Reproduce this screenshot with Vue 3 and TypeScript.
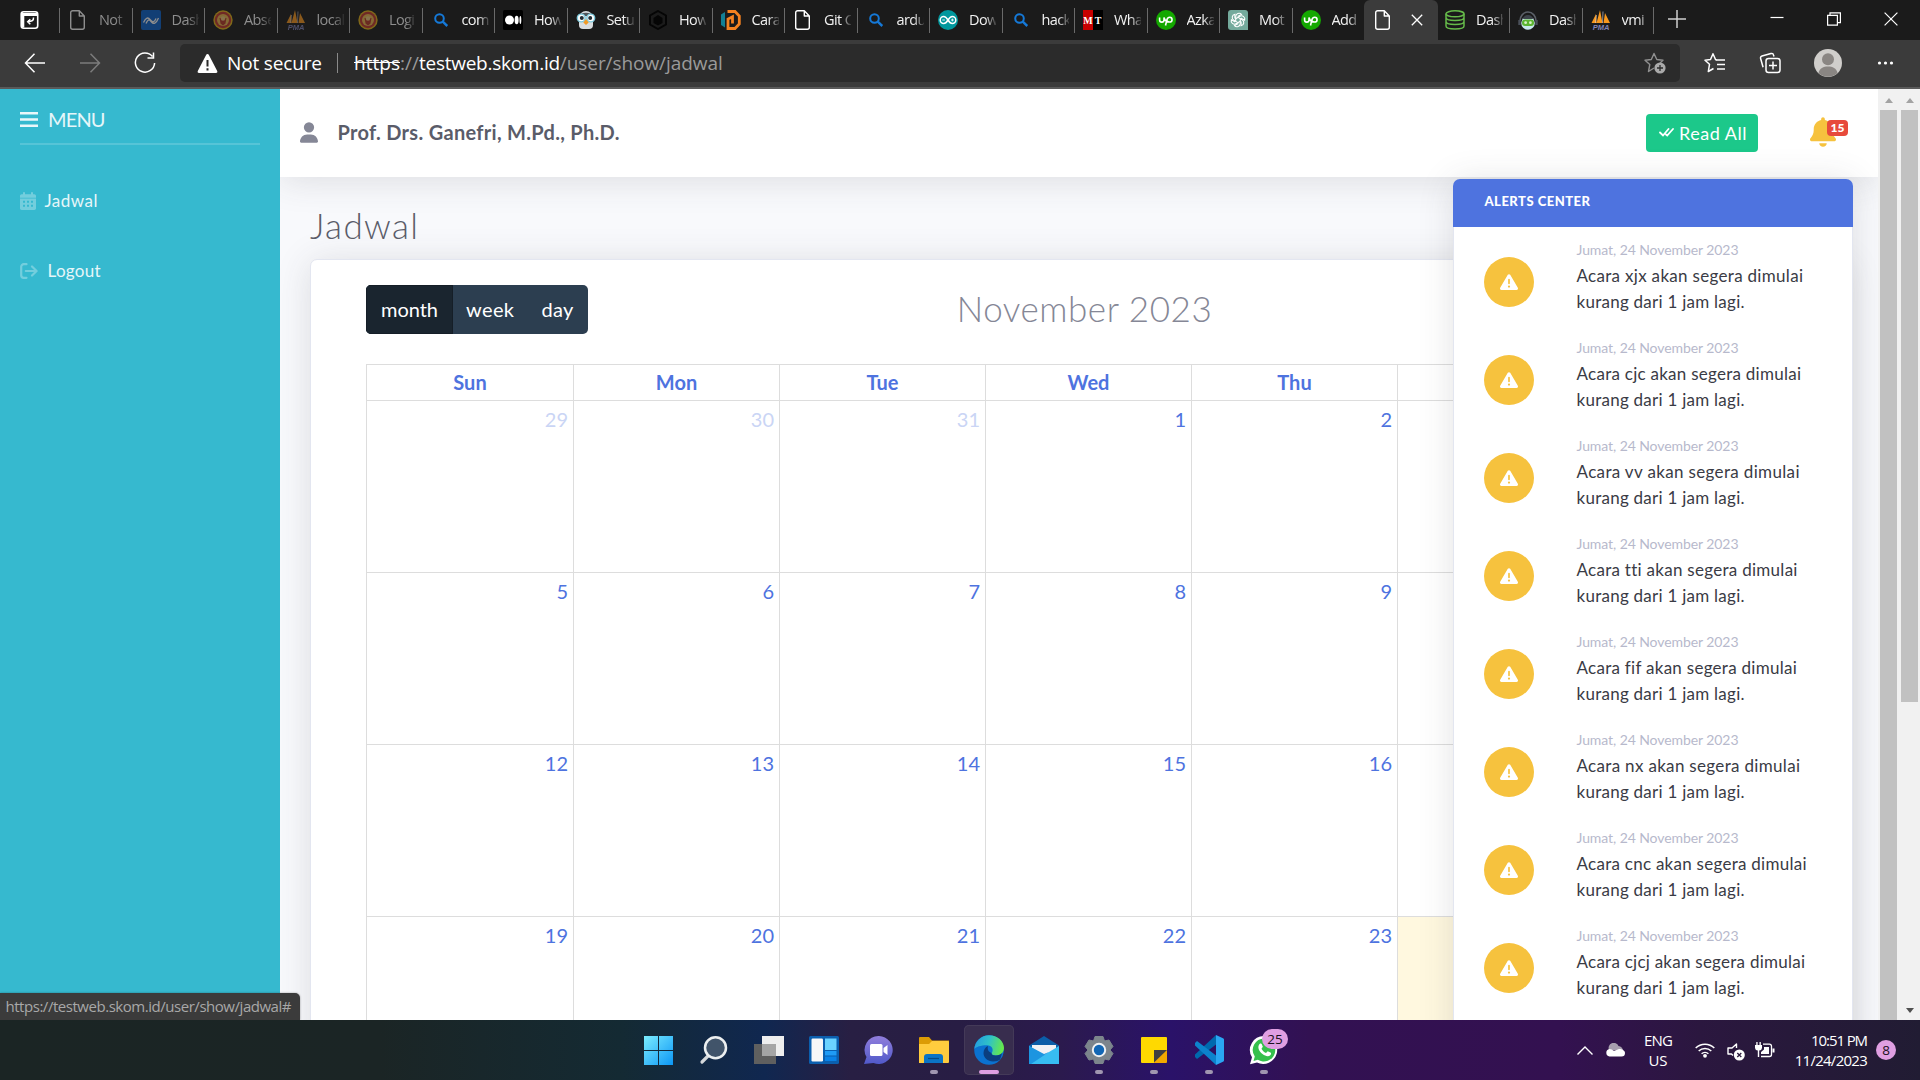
<script setup lang="ts">
import type { Directive } from 'vue'

interface Tab {
  icon: string
  label: string
  sleeping?: boolean
  active?: boolean
}

interface DayCell {
  label: string
  outside?: boolean
  today?: boolean
}

const tabs: Tab[] = [
  { icon: 'page', label: 'Not', sleeping: true },
  { icon: 'wave', label: 'Dash', sleeping: true },
  { icon: 'seal', label: 'Abse', sleeping: true },
  { icon: 'pma', label: 'local', sleeping: true },
  { icon: 'seal', label: 'Logi', sleeping: true },
  { icon: 'search', label: 'com' },
  { icon: 'medium', label: 'How' },
  { icon: 'penguin', label: 'Setu' },
  { icon: 'hex', label: 'How' },
  { icon: 'domain', label: 'Cara' },
  { icon: 'page', label: 'Git C' },
  { icon: 'search', label: 'ardu' },
  { icon: 'arduino', label: 'Dow' },
  { icon: 'search', label: 'hack' },
  { icon: 'mt', label: 'Wha' },
  { icon: 'upwork', label: 'Azka' },
  { icon: 'gpt', label: 'Mot' },
  { icon: 'upwork', label: 'Add' },
  { icon: 'page', label: '', active: true },
  { icon: 'db', label: 'Dash' },
  { icon: 'bot', label: 'Dash' },
  { icon: 'pma', label: 'vmi' },
]

const weekdays = ['Sun', 'Mon', 'Tue', 'Wed', 'Thu', '', '']

/* The last two columns lie behind the alerts panel and carry no number. */
const weeks: DayCell[][] = [0, 1, 2, 3].map((week) =>
  weekdays.map((name, column) => {
    const day = week * 7 + column - 2
    const label = name ? String(day < 1 ? 31 + day : day) : ''
    return { label, outside: day < 1, today: day === 24 }
  }),
)

const alerts: { name: string; width: number }[] = [
  { name: 'xjx', width: 226.5 },
  { name: 'cjc', width: 224.5 },
  { name: 'vv', width: 223 },
  { name: 'tti', width: 220.5 },
  { name: 'fif', width: 220 },
  { name: 'nx', width: 223.5 },
  { name: 'cnc', width: 230 },
  { name: 'cjcj', width: 228.5 },
]

/* Spreads the letters of a label so that it takes the given width. */
const vFit: Directive<HTMLElement, number> = {
  mounted(el, { value }) {
    const count = (el.textContent ?? '').length
    const natural = el.getBoundingClientRect().width
    if (count > 1 && natural > 0) {
      el.style.letterSpacing = `${((value - natural) / (count - 1)).toFixed(3)}px`
    }
  },
}
</script>

<template>
  <div class="desktop">
    <header class="tabstrip">
      <svg class="tab-actions" viewBox="0 0 20 20">
        <rect x="1.2" y="1.800" width="16.500" height="16.500" rx="2.5" fill="none" stroke="#fff" stroke-width="1.600" />
        <path d="M1.500 3h16v3h-16zM1.500 5h2.800v12.500H1.500z" fill="#fff" />
        <path d="M13.500 7.500c.3 3-1.500 4.200-5.500 4.200M10.300 9.200 7.700 11.700l2.600 2.500" fill="none" stroke="#fff" stroke-width="1.500" />
      </svg>
      <div v-for="(tab, i) in tabs" :key="i" class="tab" :class="{ sleeping: tab.sleeping, active: tab.active }">
        <svg class="favicon" viewBox="0 0 20 20">
          <template v-if="tab.icon === 'page'">
            <path d="M2.700 2.700a2 2 0 0 1 2-2h6.600l5 5.200v11.400a2 2 0 0 1-2 2H4.700a2 2 0 0 1-2-2zM11.300.8v5.200h5" fill="none" stroke="#fff" stroke-width="1.400" stroke-linejoin="round" />
          </template>
          <template v-else-if="tab.icon === 'wave'">
            <rect width="20" height="20" rx="2" fill="#0b63ce" />
            <path d="M2.500 12.500c2.500-5.500 4.500-5.500 7-2.500s4 2 5.500-1.500M5 13.500c2.500-5 3.500-4 5.500-1.500s4.500 2 7-4" fill="none" stroke="#fff" stroke-width="1.300" />
          </template>
          <template v-else-if="tab.icon === 'seal'">
            <circle cx="10" cy="10" r="9.700" fill="#e5b418" />
            <circle cx="10" cy="10" r="8.200" fill="#c4382f" />
            <circle cx="10" cy="10" r="6" fill="#efb94f" />
            <path d="M6.500 8h7l-1 5.500-2.500 2-2.500-2z" fill="#b83a28" />
            <circle cx="10" cy="8.500" r="2.200" fill="#f0c87c" />
          </template>
          <template v-else-if="tab.icon === 'pma'">
            <path d="M9 0 11.500 13H5.500zM5 4 5.500 13H.5zM14 3l5 10h-6.500z" fill="#f8981d" />
            <path d="M5.500 5 4.500 13M12 1.500 11.500 13" stroke="#d9d9e6" stroke-width=".6" />
            <text x="10" y="19.900" text-anchor="middle" class="pma-label">PMA</text>
          </template>
          <template v-else-if="tab.icon === 'search'">
            <circle cx="8.500" cy="8.500" r="4.300" fill="none" stroke="#1579d8" stroke-width="2" />
            <path d="m11.700 11.700 4.600 4.300" stroke="#1579d8" stroke-width="2.400" />
          </template>
          <template v-else-if="tab.icon === 'medium'">
            <rect width="20" height="20" rx="1.500" fill="#000" />
            <circle cx="6.500" cy="10" r="4.500" fill="#fff" />
            <ellipse cx="13.600" cy="10" rx="2" ry="4.300" fill="#fff" />
            <ellipse cx="17.400" cy="10" rx=".9" ry="3.900" fill="#fff" />
          </template>
          <template v-else-if="tab.icon === 'penguin'">
            <path d="M3 8a7 7 0 0 1 14 0v7a4 4 0 0 1-4 4H7a4 4 0 0 1-4-4z" fill="#d9dde0" />
            <path d="M3 6a7.500 5 0 0 1 14 0z" fill="#50555a" />
            <circle cx="5.200" cy="8" r="3.900" fill="#fff" stroke="#7cc9dc" stroke-width="1.400" />
            <circle cx="14.800" cy="8" r="3.900" fill="#fff" stroke="#7cc9dc" stroke-width="1.400" />
            <circle cx="5.800" cy="8" r="2" fill="#222c33" /><circle cx="14.200" cy="8" r="2" fill="#222c33" />
            <path d="m10 9 2.700 3.500L10 15l-2.700-2.500z" fill="#f09a27" />
          </template>
          <template v-else-if="tab.icon === 'hex'">
            <path d="m10 1 8 4.500v9L10 19l-8-4.500v-9z" fill="none" stroke="#050505" stroke-width="2" />
            <path d="m10 5 4.500 3v5L10 15.500 5.500 13V8z" fill="#050505" />
          </template>
          <template v-else-if="tab.icon === 'domain'">
            <path d="M0 4.500 4 2v15.500L0 15z" fill="#137f94" />
            <path d="M6.500 1.500H14l4.300 4.500v8L14 18.500H7V9l4.500-2.200v6.700" fill="none" stroke="#f58220" stroke-width="2.800" />
          </template>
          <template v-else-if="tab.icon === 'arduino'">
            <circle cx="10" cy="10" r="10" fill="#00979d" />
            <path d="M10 10C8 6.800 6.800 6.500 5.700 6.500a3.500 3.500 0 0 0 0 7c1.100 0 2.300-.3 4.300-3.500s3.200-3.500 4.300-3.500a3.500 3.500 0 0 1 0 7c-1.100 0-2.300-.3-4.300-3.500z" fill="none" stroke="#fff" stroke-width="1.500" />
            <path d="M4.300 10h2.600M13 10h2.800M14.400 8.600v2.800" stroke="#fff" stroke-width=".9" />
          </template>
          <template v-else-if="tab.icon === 'mt'">
            <path d="M0 0h10v20H0z" fill="#c80000" />
            <path d="M10 0h10v20H10z" fill="#000" />
            <text x="4.900" y="13.800" text-anchor="middle" class="mt-label">M</text>
            <text x="15" y="13.800" text-anchor="middle" class="mt-label">T</text>
          </template>
          <template v-else-if="tab.icon === 'upwork'">
            <circle cx="10" cy="10" r="10" fill="#14a800" />
            <path d="M3.600 7.500v2.400a2.200 2.200 0 0 0 4.400 0V7.500c1 2.800 2 4.500 4 4.500M9.500 15.500l1.400-5.700c.5-1.700 1.500-2.500 2.800-2.500a2.300 2.300 0 0 1 0 4.700c-1.300 0-2-.5-2.800-1.300" fill="none" stroke="#fff" stroke-width="1.600" />
          </template>
          <template v-else-if="tab.icon === 'gpt'">
            <path d="M3 0h14a3 3 0 0 1 3 3v17H3a3 3 0 0 1-3-3V3a3 3 0 0 1 3-3z" fill="#74aa9c" />
            <g fill="none" stroke="#fff" stroke-width="1.100">
              <path v-for="n in 6" :key="n" d="M7.700 11.300V6.500a3.300 3.300 0 0 1 5.800-2.100L9.700 6.600" :transform="`rotate(${n * 60} 10 10)`" />
            </g>
          </template>
          <template v-else-if="tab.icon === 'db'">
            <g fill="none" stroke="#66bb4a" stroke-width="1.500">
              <ellipse cx="10" cy="3.800" rx="9" ry="3" />
              <path d="M1 3.800v3.600c0 4 18 4 18 0V3.800M1 8v3.500c0 4 18 4 18 0V8M1 12v4c0 4 18 4 18 0v-4" />
            </g>
          </template>
          <template v-else-if="tab.icon === 'bot'">
            <path d="M2 11a8 9 0 0 1 16 0" fill="none" stroke="#5b6068" stroke-width="1.600" />
            <circle cx="10" cy="13" r="6.800" fill="#c8e8ee" />
            <rect x="4" y="9.500" width="12" height="6.500" rx="3" fill="#5cb531" />
            <circle cx="7.600" cy="12.700" r="1.400" fill="#d9f2c8" /><circle cx="12.400" cy="12.700" r="1.400" fill="#d9f2c8" />
            <path d="M5 9a5 4 0 0 1 10 0z" fill="#3d434b" />
            <path d="M1.500 10v5M18.500 10v5" stroke="#4a505a" stroke-width="2.400" />
          </template>
        </svg>
        <span v-if="!tab.active" class="tab-label">{{ tab.label }}</span>
        <svg v-else class="tab-close" viewBox="0 0 12 12"><path d="m.8.8 10.400 10.400M11.200.8.8 11.200" stroke="#fff" stroke-width="1.300" /></svg>
      </div>
      <svg class="new-tab" viewBox="0 0 18 18"><path d="M9 0v18M0 9h18" stroke="#d0d0d0" stroke-width="1.500" /></svg>
      <div class="window-controls">
        <svg viewBox="0 0 14 14"><path d="M.5 5.500h13" stroke="#fff" stroke-width="1.200" /></svg>
        <svg viewBox="0 0 14 14"><path d="M.6 3.400h9.800v9.800H.6zM3 3.400V.8h10.400v9.800h-2.800" fill="none" stroke="#fff" stroke-width="1.200" /></svg>
        <svg viewBox="0 0 14 14"><path d="m.6.6 12.800 12.800M13.400.6.6 13.400" stroke="#fff" stroke-width="1.200" /></svg>
      </div>
    </header>

    <nav class="toolbar">
      <div class="nav-buttons">
        <svg viewBox="0 0 22 22"><path d="M21 11H1.500M10.500 1.800 1.500 11l9 9.200" fill="none" stroke="#fff" stroke-width="1.500" /></svg>
        <svg viewBox="0 0 22 22"><path d="M1 11h19.500M11.500 1.800l9 9.200-9 9.200" fill="none" stroke="#7c7c7c" stroke-width="1.500" /></svg>
        <svg viewBox="0 0 22 22"><path d="M18.500 4.500A9.600 9.600 0 1 0 20.600 11M19.500.5v5.600h-6" fill="none" stroke="#fff" stroke-width="1.500" /></svg>
      </div>
      <div class="address">
        <svg class="insecure" viewBox="0 0 20 19"><path d="M10 0c.7 0 1.100.4 1.400 1l8.300 16c.5 1-.1 2-1.200 2h-17C.4 19-.2 18 .3 17L8.600 1c.3-.6.700-1 1.400-1z" fill="#fff" /><path d="M10 6v6.500M10 14.300v2.200" stroke="#2b2b2b" stroke-width="2" /></svg>
        <span class="security"><span v-fit="95">Not secure</span></span>
        <span class="address-divider"></span>
        <span class="url"><span v-fit="46" class="scheme">https</span><span v-fit="19" class="dim">://</span><span v-fit="141" class="host">testweb.skom.id</span><span v-fit="163" class="dim">/user/show/jadwal</span></span>
        <svg class="favorite" viewBox="0 0 22 22"><path d="m10 16-5.500 3.500 1.300-7L1 8.300l6.300-.8L10 1.500l2.800 6 6.200.7-3 2.800" fill="none" stroke="#909090" stroke-width="1.400" stroke-linejoin="round" /><circle cx="16" cy="16" r="5.600" fill="#aaa" /><path d="M16 13v6M13 16h6" stroke="#2b2b2b" stroke-width="1.300" /></svg>
      </div>
      <div class="actions">
        <svg class="act-star" viewBox="0 0 22 22"><path d="m12.500 8-1-.5L9 1.800 6.500 7.500 1 8.300l4.500 4-1.200 7.200L9.500 16.500" fill="none" stroke="#fff" stroke-width="1.500" stroke-linejoin="round" /><path d="M12 8h9M13 12.500h8M13 17h8" stroke="#fff" stroke-width="1.500" /></svg>
        <svg class="act-coll" viewBox="0 0 22 22"><path d="M15 4.500 14.500 3a2 2 0 0 0-2.500-1.500L3 4A2 2 0 0 0 1.600 6.500l2.500 8.800" fill="none" stroke="#fff" stroke-width="1.500" /><rect x="7" y="6.500" width="14" height="14" rx="2.500" fill="none" stroke="#fff" stroke-width="1.500" /><path d="M14 9.500v8M10 13.500h8" stroke="#fff" stroke-width="1.500" /></svg>
        <svg class="avatar" viewBox="0 0 28 28"><circle cx="14" cy="14" r="14" fill="#d0cecb" /><circle cx="14" cy="10.300" r="6" fill="#8a8683" /><path d="M4.500 24c1-5 5-6.500 9.500-6.500s8.500 1.500 9.500 6.500A14 14 0 0 1 4.500 24z" fill="#8a8683" /></svg>
        <svg class="more" viewBox="0 0 16 4"><circle cx="2" cy="2" r="1.600" fill="#fff" /><circle cx="8" cy="2" r="1.600" fill="#fff" /><circle cx="14" cy="2" r="1.600" fill="#fff" /></svg>
      </div>
    </nav>

    <main class="viewport">
      <aside class="sidebar">
        <div class="menu-head">
          <svg class="bars" viewBox="0 0 18 15"><path d="M0 1.300h18M0 7.500h18M0 13.700h18" stroke="#e9f7fa" stroke-width="2.600" /></svg>
          <span v-fit="57.500">MENU</span>
        </div>
        <hr />
        <a class="side-link jadwal">
          <svg viewBox="0 0 16 18"><path d="M4 0a1 1 0 0 1 1 1v1.300h6V1a1 1 0 0 1 2 0v1.300h1.300c.9 0 1.700.7 1.700 1.700v1.700H0V4c0-1 .8-1.700 1.700-1.700H3V1a1 1 0 0 1 1-1zM0 6.500h16v9.800c0 .9-.8 1.700-1.700 1.700H1.700C.8 18 0 17.200 0 16.300zm3 2.300v2h2v-2zm4 0v2h2v-2zm4 0v2h2v-2zm-8 4v2h2v-2zm4 0v2h2v-2zm4 0v2h2v-2z" fill="#fff" fill-rule="evenodd" /></svg>
          <span v-fit="53">Jadwal</span>
        </a>
        <a class="side-link logout">
          <svg viewBox="0 0 18 16"><path d="M6.500 1.200H3.700a2.500 2.500 0 0 0-2.500 2.500v8.600a2.500 2.500 0 0 0 2.500 2.500h2.800M5.800 8H16.500M12 3.500 16.600 8 12 12.500" fill="none" stroke="#fff" stroke-width="2.200" stroke-linecap="round" stroke-linejoin="round" /></svg>
          <span v-fit="53">Logout</span>
        </a>
      </aside>

      <section class="content">
        <div class="topbar">
          <svg class="user" viewBox="0 0 448 512"><path d="M224 256A128 128 0 1 0 224 0a128 128 0 1 0 0 256zm-45.700 48C79.800 304 0 383.800 0 482.300 0 498.700 13.300 512 29.700 512h388.600c16.400 0 29.700-13.300 29.700-29.700C448 383.800 368.200 304 269.700 304z" fill="#858796" /></svg>
          <strong v-fit="282" class="user-name">Prof. Drs. Ganefri, M.Pd., Ph.D.</strong>
          <button class="read-all">
            <svg viewBox="0 0 15 9"><path d="m1 4.500 3 3 5.500-6.500M7 6.500l1.200 1L14 1" fill="none" stroke="#fff" stroke-width="1.800" stroke-linecap="round" /></svg>
            <span v-fit="67.500">Read All</span>
          </button>
          <div class="bell">
            <svg viewBox="0 0 448 512"><path d="M224 0c-17.700 0-32 14.300-32 32v19.200C119 66 64 130.600 64 208v18.800c0 47-17.300 92.400-48.500 127.600l-7.400 8.300c-8.400 9.400-10.400 22.900-5.300 34.400S19.400 416 32 416h384c12.600 0 24-7.400 29.200-18.900s3.100-25-5.300-34.400l-7.400-8.300C401.300 319.200 384 273.900 384 226.800V208c0-77.400-55-142-128-156.800V32c0-17.700-14.300-32-32-32zm45.300 493.300c12-12 18.700-28.300 18.700-45.300H160c0 17 6.700 33.300 18.700 45.300s28.300 18.700 45.300 18.700 33.300-6.700 45.300-18.700z" fill="#f6c23e" /></svg>
            <span class="counter">15</span>
          </div>
        </div>

        <div class="page">
          <h1><span v-fit="108">Jadwal</span></h1>
          <div class="card">
            <div class="cal-toolbar">
              <div class="views">
                <button class="view current"><span v-fit="57">month</span></button>
                <button class="view"><span v-fit="48">week</span></button>
                <button class="view"><span v-fit="32">day</span></button>
              </div>
              <h2><span v-fit="255">November 2023</span></h2>
              <div class="views-spacer"></div>
            </div>
            <div class="calendar">
              <div class="weekdays">
                <div v-for="(name, column) in weekdays" :key="column">{{ name }}</div>
              </div>
              <div v-for="(week, w) in weeks" :key="w" class="week">
                <div v-for="(day, column) in week" :key="column" class="day" :class="{ outside: day.outside, today: day.today }">
                  {{ day.label }}
                </div>
              </div>
            </div>
          </div>
        </div>

        <div class="alerts">
          <div class="alerts-head"><span v-fit="105.500">ALERTS CENTER</span></div>
          <div v-for="alert in alerts" :key="alert.name" class="alert">
            <div class="alert-icon">
              <svg viewBox="0 0 512 512"><path d="M256 32c14.200 0 27.300 7.500 34.500 19.800l216 368c7.300 12.400 7.300 27.700.2 40.100S486.300 480 472 480H40c-14.300 0-27.600-7.700-34.700-20.100s-7-27.800.2-40.100l216-368C228.700 39.500 241.800 32 256 32zm0 128c-13.300 0-24 10.700-24 24v112c0 13.300 10.700 24 24 24s24-10.700 24-24V184c0-13.300-10.700-24-24-24zm32 224a32 32 0 1 0-64 0 32 32 0 1 0 64 0z" fill="#fff" /></svg>
            </div>
            <div class="alert-text">
              <div class="date"><span v-fit="162">Jumat, 24 November 2023</span></div>
              <div><span v-fit="alert.width">Acara {{ alert.name }} akan segera dimulai</span></div>
              <div><span v-fit="168">kurang dari 1 jam lagi.</span></div>
            </div>
          </div>
        </div>
      </section>

      <div class="scrollbars">
        <div class="scrollbar">
          <span class="arrow up"></span>
          <span class="thumb full"></span>
        </div>
        <div class="scrollbar">
          <span class="arrow up"></span>
          <span class="thumb"></span>
          <span class="arrow down"></span>
        </div>
      </div>

      <div class="status"><span v-fit="286">https://testweb.skom.id/user/show/jadwal#</span></div>
    </main>

    <footer class="taskbar">
      <div class="apps">
        <div class="app">
          <svg viewBox="0 0 30 30"><defs><linearGradient id="win" x1="0" y1="0" x2="30" y2="30" gradientUnits="userSpaceOnUse"><stop stop-color="#7deeff" /><stop offset="1" stop-color="#0a95f5" /></linearGradient></defs><path d="M0 1h14v14H0zM15 1h14v14H15zM0 16h14v14H0zM15 16h14v14H15z" fill="url(#win)" /></svg>
        </div>
        <div class="app">
          <svg viewBox="0 0 30 30"><path d="M9.500 20.500 3 27" stroke="#d5d8da" stroke-width="3.200" stroke-linecap="round" /><circle cx="16.500" cy="12.800" r="10.500" fill="#41546a" stroke="#eceff0" stroke-width="2.500" /></svg>
        </div>
        <div class="app">
          <svg viewBox="0 0 30 30"><path d="M8 1h22v20H8z" fill="#eee" /><path d="M0 9h22v20H0z" fill="#5f5f5f" /><path d="M8 9h14v12H8z" fill="#a5a5a5" /></svg>
        </div>
        <div class="app">
          <svg viewBox="0 0 30 30"><rect y="1" width="30" height="28" rx="1.500" fill="#0b5fae" /><rect x="2.500" y="3.500" width="11.500" height="23" rx="1.200" fill="#f7f7f7" /><path d="M16 3.500h11.500V15H16z" fill="#6bd3ff" /><path d="M16 16h11.500v4.500H16z" fill="#1f9bf5" /><path d="M16 21.500h11.500v4.500H16z" fill="#0a82e6" /></svg>
        </div>
        <div class="app">
          <svg viewBox="0 0 30 30"><defs><linearGradient id="chat" x1="0" y1="0" x2="0" y2="1"><stop stop-color="#917edc" /><stop offset="1" stop-color="#5059c9" /></linearGradient></defs><path d="M15 1a14 14 0 1 1-5.500 27L0 29l2.500-7A14 14 0 0 1 15 1z" fill="url(#chat)" /><rect x="6" y="9" width="12.500" height="12" rx="1.500" fill="#fff" /><path d="m19.500 13 4-3v10l-4-3z" fill="#fff" /></svg>
        </div>
        <div class="app running">
          <svg viewBox="0 0 30 30"><path d="M0 3a1 1 0 0 1 1-1h9l3 3.500H30V12H0z" fill="#dc9c05" /><path d="M0 9h10l3-3h16a1 1 0 0 1 1 1v20a1 1 0 0 1-1 1H0z" fill="#ffcc3e" /><path d="M5 28v-6a3 3 0 0 1 3-3h13a3 3 0 0 1 3 3v6z" fill="#0b74c6" /><path d="M9 23.500h11" stroke="#064b87" stroke-width="1.200" /></svg>
        </div>
        <div class="app focused">
          <svg viewBox="0 0 30 30"><defs><linearGradient id="edge-a" x1="0" y1=".2" x2="1" y2=".4"><stop stop-color="#249be0" /><stop offset=".5" stop-color="#2fc2c8" /><stop offset="1" stop-color="#66e94a" /></linearGradient></defs><circle cx="15" cy="15" r="14.800" fill="#0b72d0" /><path d="M.3 14C1 6 7.500.2 15 .2c8.500 0 15 6 15 12.800 0 4.500-3.500 7.500-8 7.500-3.300 0-4.800-1.200-4.300-2.500 2.400-3.300.2-7.700-4.700-7.700C6.500 10.300 2 12 .3 14z" fill="url(#edge-a)" /><path d="M17.600 18c-.5 1.300 1 2.500 4.300 2.500 2.700 0 4.800-1 6.200-2.500l-2 6.500c-1.200 1-4 2-7 2-5.500 0-9.600-4-9.600-8.500 0-3 1.800-6 4.500-7-1 4 1 6 3.600 7z" fill="#0b3f80" /></svg>
        </div>
        <div class="app">
          <svg viewBox="0 0 30 30"><path d="M0 10.500 15 1l15 9.500V29H0z" fill="#0b5ea8" /><path d="M3 10h24v10H3z" fill="#f0f2f5" /><path d="m0 11 15 9 15-9v18H0z" fill="#37bdf2" /><path d="M0 11v18h2l18-12-5 2z" fill="#1c95e0" /></svg>
        </div>
        <div class="app running">
          <svg viewBox="0 0 30 30"><path d="m11 1.500 8 0 1.500 4.500 4.500-1 4 6.500-3 3.500 3 3.500-4 6.500-4.500-1-1.500 4.500h-8l-1.500-4.500-4.500 1-4-6.500L4 15l-3-3.500 4-6.500 4.500 1z" fill="#7c858c" stroke="#7c858c" stroke-linejoin="round" /><circle cx="15" cy="15" r="6.200" fill="#1267b5" stroke="#eef1f3" stroke-width="2" /></svg>
        </div>
        <div class="app running">
          <svg viewBox="0 0 30 30"><path d="M2 3a1 1 0 0 1 1-1h24a1 1 0 0 1 1 1v12L15 28H3a1 1 0 0 1-1-1z" fill="#ffd900" /><path d="M28 15v12a1 1 0 0 1-1 1H15V15z" fill="#f2a900" /><path d="M15 15h13L15 27.500z" fill="#404040" /></svg>
        </div>
        <div class="app running">
          <svg viewBox="0 0 30 30"><path d="M22 0v30l7-3.300a1.500 1.500 0 0 0 1-1.500V4.800a1.500 1.500 0 0 0-1-1.500z" fill="#2aa6f2" /><path d="M22 0 1 19.500v2.500L3 24l19-14.500z" fill="#0069ad" /><path d="M22 30 1 10.500V8L3 6l19 14.500z" fill="#0c83cc" /></svg>
        </div>
        <div class="app running">
          <svg viewBox="0 0 30 30"><path d="M15.500 1A14 14 0 1 1 8 27.500L1 29.300l2-7A14 14 0 0 1 15.500 1z" fill="#fff" /><path d="M15.500 3.500a11.500 11.500 0 1 1-6.700 21.300L4.500 26l1.300-4.500A11.500 11.500 0 0 1 15.500 3.500z" fill="#35c04c" /><path d="M10.500 9c1-.8 2-.5 2.300.3l1 2.500-1.300 1.900c1 2 2.300 3.200 4.500 4.200l1.700-1.600 2.800 1.300c.8.5.8 1.500 0 2.500-2 2-5 1.300-8-1-3.500-2.800-5.500-7-3-10.100z" fill="#fff" /></svg>
          <span class="app-badge">25</span>
        </div>
      </div>
      <div class="tray">
        <svg class="chevron" viewBox="0 0 16 9"><path d="m.5 8.500 7.500-7.500 7.500 7.500" fill="none" stroke="#fff" stroke-width="1.400" /></svg>
        <svg class="cloud" viewBox="0 0 20 14"><path d="M4 7a5 5 0 0 1 9.500-4C16 3.500 18 5 18 8z" fill="#a79fae" /><path d="M4.500 6c1.500 0 3 .8 4.500 2l5-2c3 0 6 1.500 6 4a3.500 3.500 0 0 1-3.500 3.500h-12a3.800 3.800 0 0 1 0-7.500z" fill="#fff" /></svg>
        <div class="language"><span v-fit="29">ENG</span><span>US</span></div>
        <svg class="wifi" viewBox="0 0 20 16"><g fill="none" stroke="#fff" stroke-width="1.500"><path d="M.7 6a13.200 13.200 0 0 1 18.600 0M3.700 9a9 9 0 0 1 12.600 0M6.600 11.800a5 5 0 0 1 6.800 0" /></g><circle cx="10" cy="13.800" r="1.900" fill="#fff" /></svg>
        <svg class="volume" viewBox="0 0 18 18"><path d="M9.500 5V1L5 5H1v6h3.500L6 12.500" fill="none" stroke="#fff" stroke-width="1.400" stroke-linejoin="round" /><circle cx="12.300" cy="12" r="5.500" fill="#fff" /><path d="m10.300 10 4 4m0-4-4 4" stroke="#2a1a3c" stroke-width="1.300" /></svg>
        <svg class="battery" viewBox="0 0 20 16"><path d="M8 2.200h6.500a2 2 0 0 1 2 2v8.300a2 2 0 0 1-2 2H6" fill="none" stroke="#fff" stroke-width="1.300" /><path d="M9 5h5v7H6v-2l3-2.500zM17.500 6.500h2v4h-2zM0 3h7v3a3 3 0 0 1-2.800 2.600V15H2.800V8.600A3 3 0 0 1 0 6zM1.300 0h1.300v3H1.300zM4.500 0h1.300v3H4.500z" fill="#fff" /></svg>
        <div class="clock"><span v-fit="57">10:51 PM</span><span v-fit="73">11/24/2023</span></div>
        <span class="notifications">8</span>
      </div>
    </footer>
  </div>
</template>

<style>
body {
  margin: 0;
  overflow: hidden;
}
</style>

<style scoped>
* {
  box-sizing: border-box;
}

.desktop {
  display: flex;
  flex-direction: column;
  width: 1920px;
  height: 1080px;
  overflow: hidden;
  font-family: "Open Sans", "Noto Sans", sans-serif;
}

svg {
  display: block;
  flex: none;
}

span,
strong {
  white-space: nowrap;
}

button {
  border: 0;
  padding: 0;
  font: inherit;
  color: inherit;
}

/* Browser tabs */
.tabstrip {
  display: flex;
  height: 40px;
  background: #1b1b1b;
}

.tab-actions {
  width: 20px;
  height: 20px;
  margin: 10px 19px 0 20px;
}

.tab {
  display: flex;
  align-items: center;
  width: 72.5px;
  flex: none;
  padding-left: 9px;
  background: linear-gradient(#6a6a6a, #6a6a6a) 0 8px / 1px 25px no-repeat;
}

.favicon {
  width: 20px;
  height: 20px;
}

.tab-label {
  width: 27px;
  margin-left: 11px;
  overflow: hidden;
  font-size: 14.5px;
  letter-spacing: -0.6px;
  line-height: 20px;
  color: #f2f2f2;
  mask-image: linear-gradient(90deg, #000 60%, rgba(0, 0, 0, 0.15));
}

.sleeping .favicon {
  opacity: 0.5;
}

.sleeping .tab-label {
  color: #8e8e8e;
}

.tab.active {
  width: 74px;
  background: #3b3b3b;
  border-radius: 6px 6px 0 0;
}

.tab.active + .tab {
  width: 71px;
  padding-left: 7px;
  background: none;
}

.tab-close {
  width: 12px;
  height: 12px;
  margin-left: 18px;
}

.new-tab {
  width: 18px;
  height: 18px;
  margin: 10px 0 0 14px;
}

.tab:has(+ .new-tab) {
  border-right: 1px solid #6a6a6a;
  border-image: linear-gradient(transparent 8px, #6a6a6a 8px, #6a6a6a 33px, transparent 33px) 1;
}

.window-controls {
  display: flex;
  gap: 43px;
  margin: 12px 22px 0 auto;
}

.window-controls svg {
  width: 14px;
  height: 14px;
}

.pma-label {
  font: italic 700 7.5px "Liberation Sans", sans-serif;
  fill: #8084b8;
}

.mt-label {
  font: 700 10px "Liberation Serif", serif;
  fill: #fff;
}

/* Address bar */
.toolbar {
  display: flex;
  align-items: center;
  height: 49px;
  padding: 0 25px 1px 24px;
  background: #3b3b3b;
  border-bottom: 2px solid #5a5a5a;
}

.nav-buttons {
  display: flex;
  gap: 33px;
  width: 156px;
}

.nav-buttons svg {
  width: 22px;
  height: 22px;
}

.address {
  display: flex;
  align-items: center;
  width: 1500px;
  height: 38px;
  padding: 0 14px 0 17px;
  border-radius: 5px;
  background: #2b2b2b;
  color: #fff;
  font-size: 19px;
  line-height: 26px;
}

.insecure {
  width: 21px;
  height: 19px;
  margin-right: 9px;
}

.security {
  width: 96px;
}

.address-divider {
  width: 1px;
  height: 20px;
  margin: 0 15px 0 14px;
  background: #8a8a8a;
}

.url {
  display: flex;
  padding-left: 1px;
}

.scheme {
  text-decoration: line-through;
}

.dim {
  color: #9a9a9a;
}

.favorite {
  width: 22px;
  height: 22px;
  margin-left: auto;
}

.actions {
  display: flex;
  align-items: center;
  flex: 1;
  padding-left: 24px;
}

.act-star,
.act-coll {
  width: 22px;
  height: 22px;
}

.act-coll {
  margin-left: 33px;
}

.avatar {
  width: 28px;
  height: 28px;
  margin-left: 33px;
}

.more {
  width: 17px;
  height: 4px;
  margin-left: auto;
  margin-right: 1px;
}

/* Web page */
.viewport {
  position: relative;
  display: flex;
  height: 931px;
  overflow: hidden;
  background: #f8f9fc;
  font-family: Lato, "Open Sans", sans-serif;
}

.sidebar {
  z-index: 1;
  width: 280px;
  flex: none;
  padding: 15px 20px 0;
  background: #36b9cf;
  color: #e6f6f9;
}

.menu-head {
  display: flex;
  align-items: center;
  gap: 10px;
  height: 30px;
  font-size: 20px;
}

.bars {
  width: 18px;
  height: 15px;
}

.sidebar hr {
  height: 2px;
  margin: 9px 0 0;
  border: 0;
  background: #56c4d7;
}

.side-link {
  display: flex;
  align-items: center;
  height: 30px;
  font-size: 17px;
}

.side-link span {
  padding-bottom: 1px;
}

.side-link svg {
  opacity: 0.3;
}

.jadwal {
  gap: 8.5px;
  margin-top: 41px;
}

.jadwal svg {
  width: 16px;
  height: 18px;
}

.logout {
  gap: 9.5px;
  margin-top: 40px;
}

.logout svg {
  width: 18px;
  height: 16px;
}

.content {
  position: relative;
  width: 1598px;
  flex: none;
  overflow: hidden;
}

.topbar {
  position: relative;
  display: flex;
  align-items: center;
  height: 88px;
  padding: 0 30px 0 20px;
  background: #fff;
  box-shadow: 0 3px 35px rgba(58, 59, 69, 0.15);
}

.user {
  width: 18px;
  height: 21px;
  margin-bottom: 2px;
}

.user-name {
  margin-left: 19.5px;
  padding-bottom: 2px;
  font-size: 20px;
  line-height: 24px;
  color: #5a5c69;
}

.read-all {
  display: flex;
  align-items: center;
  gap: 5px;
  width: 112px;
  height: 38px;
  margin-left: auto;
  padding-left: 13px;
  border-radius: 4px;
  background: #1cc88a;
  color: #fff;
  font-size: 18px;
}

.read-all svg {
  width: 15px;
  height: 9px;
  margin-bottom: 2px;
}

.read-all span {
  padding-bottom: 1px;
}

.bell {
  position: relative;
  width: 38px;
  margin-left: 52px;
  padding-bottom: 3px;
}

.bell svg {
  width: 26px;
  height: 30px;
}

.counter {
  position: absolute;
  left: 17px;
  top: 3px;
  width: 21px;
  height: 16px;
  border-radius: 4px;
  background: #e74a3b;
  color: #fff;
  font-size: 12px;
  font-weight: 900;
  line-height: 15px;
  text-align: center;
}

.page {
  padding: 27px 31px 0 30px;
}

h1,
h2 {
  margin: 0;
  font-size: 35px;
  font-weight: 300;
  line-height: 42px;
}

h1 {
  color: #5a5c69;
}

.card {
  height: 900px;
  margin-top: 13px;
  padding: 25px 38px 0 55px;
  border: 1px solid #e3e6f0;
  border-radius: 7px;
  background: #fff;
  box-shadow: 0 3px 35px rgba(58, 59, 69, 0.15);
}

.cal-toolbar {
  display: flex;
  align-items: center;
  height: 49px;
}

.views {
  display: flex;
  width: 222px;
  overflow: hidden;
  border-radius: 5px;
  background: #2c3e50;
}

.view {
  height: 49px;
  padding: 0 13px 2px;
  background: none;
  color: #fff;
  font-size: 20px;
}

.view.current {
  width: 87px;
  background: #1a252f;
  box-shadow: inset 0 0 0 1px #151e27;
}

.view:last-child {
  padding-left: 14px;
}

h2 {
  flex: 1;
  padding: 0 0 4px 1px;
  text-align: center;
  color: #858796;
}

.views-spacer {
  width: 228px;
}

.calendar {
  width: 1444px;
  margin-top: 30px;
  border: solid #ddd;
  border-width: 1px 0 0 1px;
  color: #4e73df;
  font-size: 20px;
}

.weekdays,
.week {
  display: grid;
  grid-template-columns: 207px repeat(6, 206px);
}

.weekdays > div {
  height: 36px;
  border: solid #ddd;
  border-width: 0 1px 1px 0;
  font-weight: 700;
  line-height: 35px;
  text-align: center;
}

.day {
  height: 172px;
  padding: 5px 5px 0 0;
  border: solid #ddd;
  border-width: 0 1px 1px 0;
  line-height: 26px;
  text-align: right;
}

.day.outside {
  color: #cad5f5;
}

.day.today {
  background: #fff8df;
}

/* Alerts dropdown */
.alerts {
  position: absolute;
  left: 1173px;
  top: 90px;
  width: 400px;
  height: 900px;
  border: 1px solid #e3e6f0;
  border-radius: 7px;
  background: #fff;
  box-shadow: 0 3px 35px rgba(58, 59, 69, 0.15);
}

.alerts-head {
  height: 48px;
  margin: -1px -1px 0;
  padding-left: 31.5px;
  border-radius: 7px 7px 0 0;
  background: #4e73df;
  color: #fff;
  font-size: 13px;
  font-weight: 900;
  line-height: 45px;
}

.alert {
  display: flex;
  align-items: center;
  height: 98px;
  padding: 12px 0 0 30px;
}

.alert-icon {
  display: flex;
  align-items: center;
  justify-content: center;
  width: 50px;
  height: 50px;
  margin-right: 42.5px;
  border-radius: 50%;
  background: #f6c23e;
}

.alert-icon svg {
  width: 18px;
  height: 18px;
  margin-bottom: 1px;
}

.alert-text {
  color: #3a3b45;
  font-size: 17px;
  line-height: 26px;
  padding-bottom: 13px;
}

.alert-text .date {
  color: #b7b9cc;
  font-size: 14px;
}

/* Scrollbars */
.scrollbars {
  display: flex;
  flex: 1;
  gap: 4px;
  padding-left: 2px;
  background: #f1f1f1;
}

.scrollbar {
  display: flex;
  flex-direction: column;
  align-items: center;
  width: 17px;
}

.arrow {
  border: solid transparent;
  border-width: 0 4.5px;
}

.arrow.up {
  margin: 9px 0 7px;
  border-bottom: 5px solid #a3a3a3;
}

.arrow.down {
  margin: auto 0 7px;
  border-top: 5px solid #505050;
}

.thumb {
  width: 17px;
  height: 592px;
  background: #c1c1c1;
}

.thumb.full {
  flex: 1;
}

.status {
  position: absolute;
  z-index: 2;
  left: 0;
  bottom: 0;
  width: 300px;
  height: 27px;
  padding-left: 5.5px;
  border-radius: 0 5px 0 0;
  background: #3b3b3b;
  box-shadow: 0 0 2px rgba(0, 0, 0, 0.4);
  color: #a8a8a8;
  font-family: "Open Sans", "Noto Sans", sans-serif;
  font-size: 15px;
  line-height: 27px;
}

/* Taskbar */
.taskbar {
  display: flex;
  justify-content: space-between;
  height: 60px;
  padding: 5px 24px 0 634px;
  background: linear-gradient(90deg, #1b2524 0, #1b2525 380px, #142a33 620px, #102750 765px, #281f43 850px, #281d44 960px, #2b1a4d 1060px, #2a1269 1170px, #321152 1310px, #331150 1560px, #2b173f 1700px, #211c33 1920px);
  color: #fff;
}

.apps {
  display: flex;
  gap: 5px;
}

.app {
  position: relative;
  display: flex;
  flex-direction: column;
  align-items: center;
  width: 50px;
  height: 50px;
  padding-top: 10px;
  border-radius: 5px;
}

.app svg {
  width: 30px;
  height: 30px;
}

.app.running::after,
.app.focused::after {
  content: "";
  width: 8px;
  height: 4px;
  margin-top: 5px;
  border-radius: 2px;
  background: #a096b0;
}

.app.focused {
  background: #382d4e;
  box-shadow: inset 0 0 0 1px #443a58;
}

.app.focused::after {
  width: 20px;
  background: #df9fe2;
}

.app-badge {
  position: absolute;
  left: 23px;
  top: 4px;
  width: 26px;
  height: 20px;
  border-radius: 10px;
  background: #df9fe2;
  color: #1a1020;
  font-size: 13.5px;
  line-height: 20px;
  text-align: center;
}

.tray {
  display: flex;
  align-items: center;
  height: 50px;
}

.chevron {
  width: 16px;
  height: 9px;
}

.cloud {
  width: 20px;
  height: 14px;
  margin-left: 12px;
}

.language {
  display: flex;
  flex-direction: column;
  align-items: center;
  width: 30px;
  margin: 0 22px 0 18px;
  font-size: 15px;
  line-height: 20px;
}

.wifi {
  width: 20px;
  height: 16px;
}

.volume {
  width: 18px;
  height: 18px;
  margin: 4px 0 0 12px;
}

.battery {
  width: 20px;
  height: 16px;
  margin-left: 10px;
}

.clock {
  display: flex;
  flex-direction: column;
  align-items: flex-end;
  width: 73px;
  margin: 0 9px 0 19px;
  font-size: 15px;
  line-height: 20px;
}

.notifications {
  width: 20px;
  height: 20px;
  border-radius: 50%;
  background: #df9fe2;
  color: #1a1020;
  font-size: 13.5px;
  line-height: 20px;
  text-align: center;
}
</style>
